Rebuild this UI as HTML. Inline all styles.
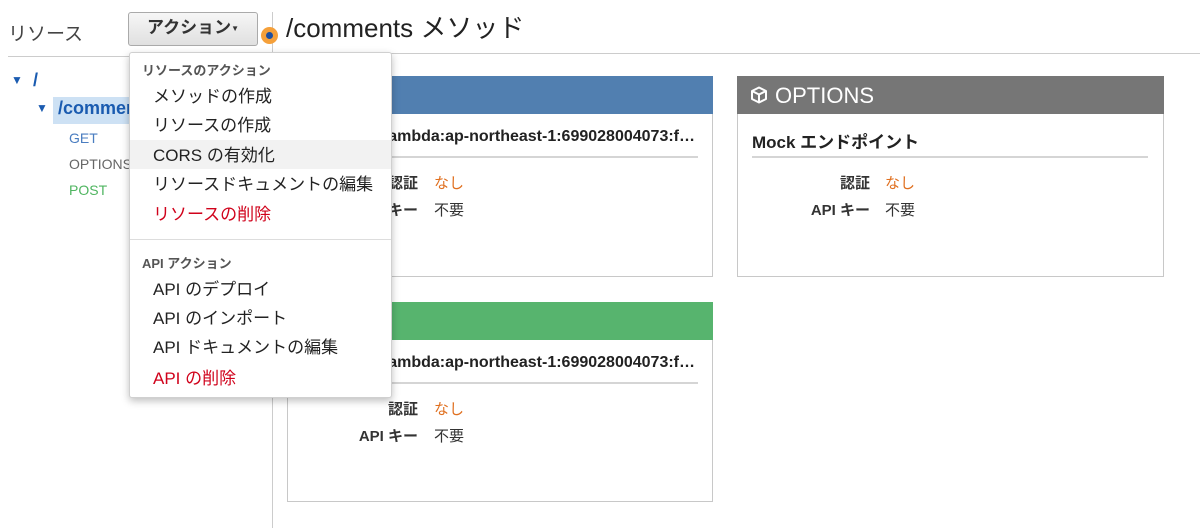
<!DOCTYPE html>
<html><head><meta charset="utf-8">
<style>
*{margin:0;padding:0;box-sizing:border-box}
body{width:1200px;height:528px;overflow:hidden;background:#fff;font-family:"Liberation Sans","Noto Sans CJK JP",sans-serif;color:#333;position:relative}
.a{position:absolute;white-space:nowrap}
.card{position:absolute;border:1px solid #c8c8c8;background:#fff}
.card .hd{height:38px;margin:-1px -1px 0 -1px}
.lbl{position:absolute;font-weight:bold;font-size:15px;color:#333;text-align:right}
.val{position:absolute;font-size:15px}
.menu{position:absolute;left:129px;top:52px;width:263px;height:346px;background:#fff;border:1px solid #d0d0d0;border-radius:3px;box-shadow:0 3px 8px rgba(0,0,0,.25);z-index:10}
.mi{position:absolute;left:23px;font-size:17px;color:#222;white-space:nowrap}
.sh{position:absolute;left:12px;font-size:13px;font-weight:bold;color:#555;white-space:nowrap}
</style></head><body>
<div class="a" style="left:8px;top:19px;font-size:19px;color:#444">リソース</div>
<div class="a" style="left:8px;top:56px;width:264px;height:1px;background:#ccc"></div>
<div class="a" style="left:272px;top:53px;width:928px;height:1px;background:#ccc"></div>
<div class="a" style="left:272px;top:12px;width:1px;height:516px;background:#ccc"></div>
<div class="a" style="left:128px;top:12px;width:130px;height:34px;border:1px solid #aaa;border-radius:3px;background:linear-gradient(#f6f6f6,#e0e0e0);font-weight:bold;font-size:17px;color:#333;text-align:center;line-height:30px">アクション<span style="font-size:8px;vertical-align:2px">▼</span></div>
<div class="a" style="left:261px;top:27px;width:17px;height:17px;border-radius:50%;background:#f5a03a"></div>
<div class="a" style="left:266px;top:32px;width:7px;height:7px;border-radius:50%;background:#1d4fa0"></div>
<div class="a" style="left:286px;top:8px;font-size:26px;color:#222">/comments メソッド</div>
<!-- tree -->
<div class="a" style="left:11px;top:73px;font-size:12px;color:#1a5bb0">▼</div>
<div class="a" style="left:33px;top:70px;font-size:18px;font-weight:bold;color:#1a5bb0">/</div>
<div class="a" style="left:36px;top:101px;font-size:12px;color:#1a5bb0">▼</div>
<div class="a" style="left:53px;top:97px;width:80px;height:27px;background:#cde1f4"></div>
<div class="a" style="left:58px;top:98px;font-size:18px;font-weight:bold;color:#1a5bb0">/comments</div>
<div class="a" style="left:69px;top:130px;font-size:14px;color:#4a7dc0">GET</div>
<div class="a" style="left:69px;top:156px;font-size:14px;color:#666">OPTIONS</div>
<div class="a" style="left:69px;top:182px;font-size:14px;color:#4fb560">POST</div>
<!-- cards -->
<div class="card" style="left:287px;top:76px;width:426px;height:201px">
 <div class="hd" style="background:#517fb0"></div>
 <div class="a" style="right:17px;top:51px;font-size:16px;font-weight:bold;color:#222">Lambda arn:aws:lambda:ap-northeast-1:699028004073:f…</div>
 <div class="a" style="left:13px;top:79px;width:397px;height:2px;background:#d5d5d5"></div>
 <div class="lbl" style="right:294px;top:95px">認証</div><div class="val" style="left:146px;top:95px;color:#e07020">なし</div>
 <div class="lbl" style="right:294px;top:122px">API キー</div><div class="val" style="left:146px;top:122px">不要</div>
</div>
<div class="card" style="left:287px;top:302px;width:426px;height:200px">
 <div class="hd" style="background:#57b46e"></div>
 <div class="a" style="right:17px;top:51px;font-size:16px;font-weight:bold;color:#222">Lambda arn:aws:lambda:ap-northeast-1:699028004073:f…</div>
 <div class="a" style="left:13px;top:79px;width:397px;height:2px;background:#d5d5d5"></div>
 <div class="lbl" style="right:294px;top:95px">認証</div><div class="val" style="left:146px;top:95px;color:#e07020">なし</div>
 <div class="lbl" style="right:294px;top:122px">API キー</div><div class="val" style="left:146px;top:122px">不要</div>
</div>
<div class="card" style="left:737px;top:76px;width:427px;height:201px">
 <div class="hd" style="background:#767676;position:relative">
  <svg class="a" style="left:13px;top:10px" width="18" height="18" viewBox="0 0 18 18"><path d="M9 1.5L16 5v8l-7 3.5L2 13V5z M2 5l7 3.5L16 5 M9 8.5v8" fill="none" stroke="#fff" stroke-width="2" stroke-linejoin="round"/></svg>
  <div class="a" style="left:38px;top:7px;font-size:22px;color:#fff">OPTIONS</div>
 </div>
 <div class="a" style="left:14px;top:51px;font-size:17px;font-weight:bold;color:#222">Mock エンドポイント</div>
 <div class="a" style="left:14px;top:79px;width:396px;height:2px;background:#d5d5d5"></div>
 <div class="lbl" style="right:293px;top:95px">認証</div><div class="val" style="left:147px;top:95px;color:#e07020">なし</div>
 <div class="lbl" style="right:293px;top:122px">API キー</div><div class="val" style="left:147px;top:122px">不要</div>
</div>
<!-- menu -->
<div class="menu">
 <div class="sh" style="top:7px">リソースのアクション</div>
 <div class="mi" style="top:29px">メソッドの作成</div>
 <div class="mi" style="top:58px">リソースの作成</div>
 <div class="a" style="left:0;top:87px;width:261px;height:29px;background:#f2f2f2"></div>
 <div class="mi" style="top:88px">CORS の有効化</div>
 <div class="mi" style="top:117px">リソースドキュメントの編集</div>
 <div class="mi" style="top:147px;color:#d0021b">リソースの削除</div>
 <div class="a" style="left:0;top:186px;width:261px;height:1px;background:#ddd"></div>
 <div class="sh" style="top:200px">API アクション</div>
 <div class="mi" style="top:222px">API のデプロイ</div>
 <div class="mi" style="top:251px">API のインポート</div>
 <div class="mi" style="top:280px">API ドキュメントの編集</div>
 <div class="mi" style="top:311px;color:#d0021b">API の削除</div>
</div>
</body></html>
